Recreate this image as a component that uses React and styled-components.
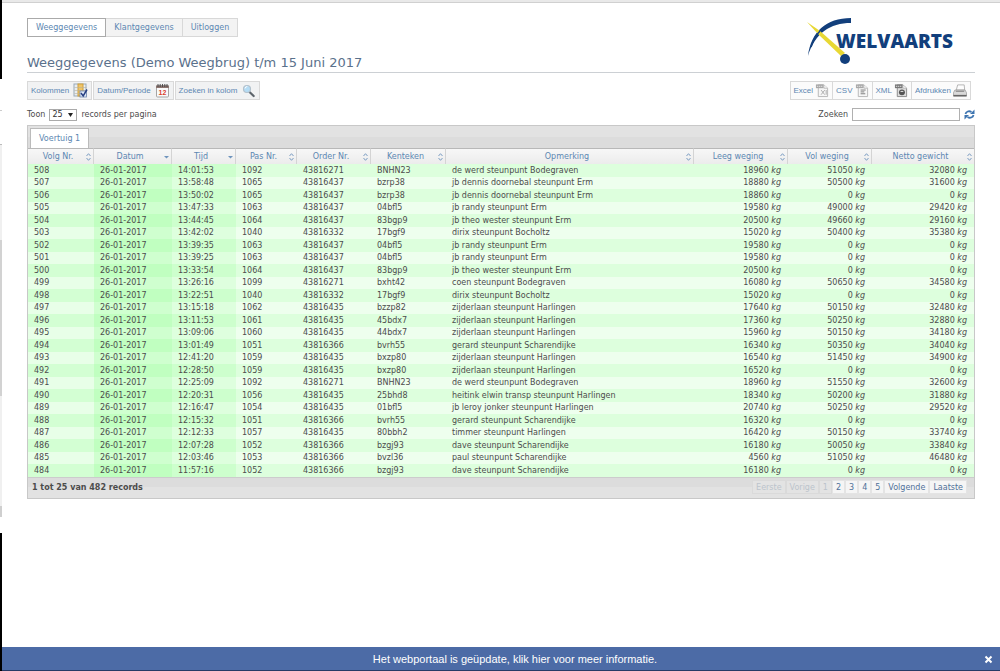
import React, { useState } from "react";
import styled, { createGlobalStyle } from "styled-components";

const GlobalStyle = createGlobalStyle`
  * {
    box-sizing: border-box;
  }

  body {
    margin: 0;
    background: #fff;
    color: #4c4c4c;
    font-family: "DejaVu Sans", Verdana, sans-serif;
    font-size: 8px;
  }

  button,
  input,
  select {
    margin: 0;
    font-family: inherit;
    font-size: inherit;
  }
`;

const Page = styled.div`
  display: flex;
  min-height: 100vh;
`;

const Edge = styled.div`
  display: flex;
  flex-direction: column;
  flex: 0 0 2px;
`;

const EdgePart = styled.div`
  flex: ${({ size }) => (size ? `0 0 ${size}px` : "1 0 0")};
  background: ${({ color }) => color};
`;

const Screen = styled.div`
  display: flex;
  flex-direction: column;
  flex: 1;
  min-width: 0;
  border-top: 2px solid #e9e9e9;
`;

const Content = styled.main`
  flex: 1;
  padding: 15px 25px 16px 25px;
  border-top: 1px solid #d0d0d0;
`;

const Header = styled.header`
  display: flex;
  justify-content: space-between;
  height: 55px;
  border-bottom: 1px solid #ccd0d4;
`;

const HeaderLeft = styled.div`
  display: flex;
  flex-direction: column;
  justify-content: space-between;
`;

const Nav = styled.nav`
  display: flex;
`;

const NavLink = styled.a`
  padding: 1px 8px 0;
  margin-left: -1px;
  line-height: 16px;
  color: #5c87b2;
  text-decoration: none;
  border: 1px solid #d8d8d8;
  background: #f3f3f3;

  &:first-child {
    margin-left: 0;
  }

  &[aria-current] {
    position: relative;
    background: #fff;
    border-color: #aaa;
  }
`;

const Title = styled.h1`
  margin: 0;
  color: #5a718c;
  font-size: 13px;
  font-weight: normal;
  line-height: 19px;
`;

const Logo = styled.svg`
  width: 152px;
  height: 48px;
  margin-right: 17px;
`;

const Toolbar = styled.div`
  display: flex;
  justify-content: space-between;
  padding: 8px 4px 0 0;
`;

const ToolGroup = styled.div`
  display: flex;
  gap: ${({ gap }) => gap || 0}px;
`;

const ToolButton = styled.button`
  display: flex;
  align-items: center;
  gap: ${({ joined }) => (joined ? 2 : 4)}px;
  height: 19px;
  padding: 0 3px;
  margin-left: ${({ joined }) => (joined ? "-1px" : "0")};
  color: #5c87b2;
  font-family: "Liberation Sans", Arial, sans-serif;
  font-size: 8px;
  white-space: nowrap;
  border: 1px solid #d9d9d9;
  background: ${({ joined }) => (joined ? "#fbfbfb" : "#f1f2f3")};

  svg {
    width: ${({ joined }) => (joined ? 14 : 15)}px;
    height: 15px;
  }
`;

const Filters = styled.div`
  display: flex;
  align-items: center;
  justify-content: space-between;
  height: 25px;
  padding-top: 4px;

  label {
    display: flex;
    align-items: center;
    gap: 4px;
  }
`;

const LengthBox = styled.span`
  position: relative;
  display: flex;
`;

const LengthSelect = styled.select`
  appearance: none;
  width: 28px;
  height: 12px;
  padding: 0 2px;
  color: #333;
  line-height: 10px;
  border: 1px solid #aaa;
  border-radius: 0;
  background: #fff;
`;

const LengthArrow = styled.svg`
  position: absolute;
  top: 4px;
  right: 4px;
  width: 5px;
  height: 4px;
  pointer-events: none;
`;

const SearchArea = styled.div`
  display: flex;
  align-items: center;
  gap: 4px;
`;

const SearchInput = styled.input`
  width: 108px;
  height: 13px;
  padding: 0 2px;
  border: 1px solid #b0b0b0;
  background: #fff;
`;

const RefreshButton = styled.button`
  display: flex;
  padding: 0;
  border: 0;
  background: none;

  svg {
    width: 11px;
    height: 11px;
  }
`;

const Grid = styled.section`
  border: 1px solid #c8c8c8;
  background: #e1e1e1;
`;

const TabBar = styled.div`
  display: flex;
  align-items: flex-end;
  height: 22px;
  padding-left: 2px;
  background: linear-gradient(#e2e2e2 0 11px, #dcdcdc 11px);
`;

const Tab = styled.button`
  height: 20px;
  padding: 0 8px;
  color: #5c87b2;
  border: 1px solid #bbb;
  border-bottom: 0;
  background: #fff;
`;

const Table = styled.table`
  width: 100%;
  table-layout: fixed;
  border-collapse: separate;
  border-spacing: 0;
`;

const Th = styled.th`
  width: ${({ size }) => (size ? `${size}px` : "auto")};
  height: 16px;
  padding: 0;
  border-top: 1px solid #b8b8b8;
  border-right: 1px solid #d4d4d4;
  background: linear-gradient(#f7f7f7, #ececec);

  &:last-child {
    border-right: 0;
  }
`;

const SortButton = styled.button`
  display: flex;
  align-items: center;
  width: 100%;
  height: 15px;
  padding: 0 2px;
  color: #5c87b2;
  border: 0;
  background: none;

  span {
    flex: 1;
    text-align: center;
  }

  svg {
    width: 5px;
    height: 8px;
  }
`;

const Tr = styled.tr`
  height: 12px;
  background: #eeffee;

  &:nth-child(odd) {
    height: 13px;
    background: #ddffdd;
  }
`;

const tints = {
  first: ["#c0ffc0", "#cfffcf"],
  second: ["#cdffcd", "#deffde"],
  third: ["#d3ffd3", "#e8ffe8"],
};

const Td = styled.td`
  padding: 0 7px 0 6px;
  line-height: 12px;
  white-space: nowrap;
  text-align: ${({ align }) => align || "left"};
  background: ${({ tint }) => (tint ? tints[tint][1] : "none")};

  ${Tr}:nth-child(odd) & {
    background: ${({ tint }) => (tint ? tints[tint][0] : "none")};
  }
`;

const GridFooter = styled.div`
  display: flex;
  align-items: center;
  justify-content: space-between;
  height: 21px;
  padding: 0 7px 2px 4px;
  border-top: 1px solid #ccc;
  background: linear-gradient(#dcdcdc 0 9px, #e2e2e2 9px);
`;

const Pager = styled.nav`
  display: flex;
`;

const PageButton = styled.button`
  height: 14px;
  padding: 0 3px;
  color: #4f7199;
  border: 1px solid #e4e4e4;
  background: #f5f5f5;

  &:disabled {
    color: #bcc4cc;
    border-color: #dadada;
    background: #e3e3e3;
  }
`;

const Notice = styled.footer`
  display: flex;
  align-items: center;
  height: 24px;
  padding: 0 7px 0 44px;
  border-bottom: 1px solid #283b66;
  background: #4c6ba6;
`;

const NoticeLink = styled.a`
  flex: 1;
  color: #fff;
  font-family: "Liberation Sans", Arial, sans-serif;
  font-size: 11px;
  text-align: center;
  text-decoration: none;
`;

const CloseButton = styled.button`
  display: flex;
  padding: 2px 0 0;
  border: 0;
  background: none;

  svg {
    width: 9px;
    height: 9px;
  }
`;

const columns = [
  { name: "Volg Nr.", size: 66, sort: "both", tint: "third" },
  { name: "Datum", size: 78, sort: "desc", tint: "first" },
  { name: "Tijd", size: 64, sort: "desc", tint: "second" },
  { name: "Pas Nr.", size: 61, sort: "both" },
  { name: "Order Nr.", size: 74, sort: "both" },
  { name: "Kenteken", size: 75, sort: "both" },
  { name: "Opmerking", sort: "both" },
  { name: "Leeg weging", size: 94, sort: "both", weight: true },
  { name: "Vol weging", size: 84, sort: "both", weight: true },
  { name: "Netto gewicht", size: 102, sort: "both", weight: true },
];

const rows = [
  [508, "26-01-2017", "14:01:53", 1092, 43816271, "BNHN23", "de werd steunpunt Bodegraven", 18960, 51050, 32080],
  [507, "26-01-2017", "13:58:48", 1065, 43816437, "bzrp38", "jb dennis doornebal steunpunt Erm", 18880, 50500, 31600],
  [506, "26-01-2017", "13:50:02", 1065, 43816437, "bzrp38", "jb dennis doornebal steunpunt Erm", 18860, 0, 0],
  [505, "26-01-2017", "13:47:33", 1063, 43816437, "04bfl5", "jb randy steunpunt Erm", 19580, 49000, 29420],
  [504, "26-01-2017", "13:44:45", 1064, 43816437, "83bgp9", "jb theo wester steunpunt Erm", 20500, 49660, 29160],
  [503, "26-01-2017", "13:42:02", 1040, 43816332, "17bgf9", "dirix steunpunt Bocholtz", 15020, 50400, 35380],
  [502, "26-01-2017", "13:39:35", 1063, 43816437, "04bfl5", "jb randy steunpunt Erm", 19580, 0, 0],
  [501, "26-01-2017", "13:39:25", 1063, 43816437, "04bfl5", "jb randy steunpunt Erm", 19580, 0, 0],
  [500, "26-01-2017", "13:33:54", 1064, 43816437, "83bgp9", "jb theo wester steunpunt Erm", 20500, 0, 0],
  [499, "26-01-2017", "13:26:16", 1099, 43816271, "bxht42", "coen steunpunt Bodegraven", 16080, 50650, 34580],
  [498, "26-01-2017", "13:22:51", 1040, 43816332, "17bgf9", "dirix steunpunt Bocholtz", 15020, 0, 0],
  [497, "26-01-2017", "13:15:18", 1062, 43816435, "bzzp82", "zijderlaan steunpunt Harlingen", 17640, 50150, 32480],
  [496, "26-01-2017", "13:11:53", 1061, 43816435, "45bdx7", "zijderlaan steunpunt Harlingen", 17360, 50250, 32880],
  [495, "26-01-2017", "13:09:06", 1060, 43816435, "44bdx7", "zijderlaan steunpunt Harlingen", 15960, 50150, 34180],
  [494, "26-01-2017", "13:01:49", 1051, 43816366, "bvrh55", "gerard steunpunt Scharendijke", 16340, 50350, 34040],
  [493, "26-01-2017", "12:41:20", 1059, 43816435, "bxzp80", "zijderlaan steunpunt Harlingen", 16540, 51450, 34900],
  [492, "26-01-2017", "12:28:50", 1059, 43816435, "bxzp80", "zijderlaan steunpunt Harlingen", 16520, 0, 0],
  [491, "26-01-2017", "12:25:09", 1092, 43816271, "BNHN23", "de werd steunpunt Bodegraven", 18960, 51550, 32600],
  [490, "26-01-2017", "12:20:31", 1056, 43816435, "25bhd8", "heitink elwin transp steunpunt Harlingen", 18340, 50200, 31880],
  [489, "26-01-2017", "12:16:47", 1054, 43816435, "01bfl5", "jb leroy jonker steunpunt Harlingen", 20740, 50250, 29520],
  [488, "26-01-2017", "12:15:32", 1051, 43816366, "bvrh55", "gerard steunpunt Scharendijke", 16320, 0, 0],
  [487, "26-01-2017", "12:12:33", 1057, 43816435, "80bbh2", "timmer steunpunt Harlingen", 16420, 50150, 33740],
  [486, "26-01-2017", "12:07:28", 1052, 43816366, "bzgj93", "dave steunpunt Scharendijke", 16180, 50050, 33840],
  [485, "26-01-2017", "12:03:46", 1053, 43816366, "bvzl36", "paul steunpunt Scharendijke", 4560, 51050, 46480],
  [484, "26-01-2017", "11:57:16", 1052, 43816366, "bzgj93", "dave steunpunt Scharendijke", 16180, 0, 0],
];

const edgeParts = [
  { size: 79, color: "#000" },
  { size: 31, color: "#fff" },
  { size: 1, color: "#ccc" },
  { size: 33, color: "#fff" },
  { size: 1, color: "#bbb" },
  { size: 95, color: "#f0f0f0" },
  { size: 156, color: "#d2d2d2" },
  { size: 110, color: "#f0f0f0" },
  { size: 11, color: "#cfcfcf" },
  { size: 16, color: "#fff" },
  { color: "#000" },
];

const ColumnsIcon = () => (
  <svg viewBox="0 0 15 15">
    <rect x="1" y="1" width="12" height="12" fill="#e8edf2" stroke="#9aa9b8" />
    <rect x="5" y="1" width="5" height="12" fill="#f0c568" stroke="#d0a03c" />
    <path d="M1.5 4.5h12M1.5 7.5h12M1.5 10.5h12" stroke="#b9b29a" strokeWidth="0.6" />
    <rect x="7" y="8" width="6.500" height="6" fill="#dfe9f7" stroke="#6b84ad" strokeWidth="0.8" />
    <path d="M8 10l2.200 3L14 6.500" fill="none" stroke="#263f82" strokeWidth="1.500" />
  </svg>
);

const CalendarIcon = () => (
  <svg viewBox="0 0 15 15">
    <rect x="1.500" y="2.500" width="12" height="11.500" rx="1" fill="#fafafa" stroke="#a5a5a5" />
    <path d="M1 2.500h13v2.500H1z" fill="#8d7570" />
    <path d="M3 1v3M5.200 1v3M7.500 1v3M9.800 1v3M12 1v3" stroke="#444" strokeWidth="0.9" />
    <text x="7.500" y="12" textAnchor="middle" fontSize="7" fontWeight="bold" fill="#d8402c">12</text>
  </svg>
);

const SearchIcon = () => (
  <svg viewBox="0 0 15 15">
    <path d="M8.500 9l4.200 4" stroke="#5d656c" strokeWidth="2.200" strokeLinecap="round" />
    <circle cx="6" cy="6" r="3.500" fill="#b4dcf5" stroke="#b3c1cc" strokeWidth="1.200" />
    <path d="M4 5.500a2.300 2.300 0 0 1 2.300-2" fill="none" stroke="#fff" />
  </svg>
);

const FileIcon = ({ children, dark }) => (
  <svg viewBox="0 0 15 15">
    <path d="M3.500 1.500h6l4 3.500v9h-10z" fill={dark ? "#ddd" : "#f6f6f6"} stroke={dark ? "#888" : "#b5b5b5"} />
    <path d="M9.500 1.500V5h4" fill="#fff" stroke="#b5b5b5" />
    <rect x="1" y="1" width="8" height="4" fill={dark ? "#777" : "#a8a8a8"} />
    <path d="M2 3h6" stroke="#eee" strokeWidth="0.9" strokeDasharray="1.500 0.700" />
    {children}
  </svg>
);

const PrinterIcon = () => (
  <svg viewBox="0 0 15 15">
    <path d="M3.500 7L5 1.500h7L12.500 7z" fill="#fdfdfd" stroke="#aaa" strokeWidth="0.9" />
    <path d="M2 7h11l1.500 3v3.500H.5V10z" fill="#d9d9d9" stroke="#999" strokeWidth="0.8" />
    <path d="M3 8.300h9" stroke="#777" />
    <path d="M.5 13h14" stroke="#666" strokeWidth="1.600" />
  </svg>
);

const SortIcon = ({ direction }) => (
  <svg viewBox="0 0 5 8">
    {direction === "both" ? (
      <path d="M0.500 3L2.500 0.700 4.500 3M0.500 5L2.500 7.300 4.500 5" fill="none" stroke="#6f94bd" strokeWidth="0.9" />
    ) : (
      <path d="M0 3h5L2.500 5.500z" fill="#6f94bd" />
    )}
  </svg>
);

const WelvaartsLogo = () => (
  <Logo viewBox="0 0 152 48" role="img" aria-label="Welvaarts">
    <path d="M2 38C5 14 20 0 45 0v5C24 5 9 15 2 38z" fill="#123f7c" />
    <path d="M1 4l13 9 25 22-4 3-23-22z" fill="#e8d834" />
    <path d="M5 29C7 23 10 17 14 13" fill="none" stroke="#123f7c" strokeWidth="1.500" />
    <circle cx="39" cy="41" r="5" fill="#123f7c" />
    <text x="30" y="30" fontFamily="Open Sans" fontWeight="800" fontSize="19" fill="#123f7c">
      WELVAARTS
    </text>
  </Logo>
);

const App = () => {
  const [noticeOpen, setNoticeOpen] = useState(true);

  return (
    <Page>
      <GlobalStyle />
      <Edge>
        {edgeParts.map((part, index) => (
          <EdgePart key={index} size={part.size} color={part.color} />
        ))}
      </Edge>
      <Screen>
        <Content>
          <Header>
            <HeaderLeft>
              <Nav>
                <NavLink href="#weeggegevens" aria-current="page">Weeggegevens</NavLink>
                <NavLink href="#klantgegevens">Klantgegevens</NavLink>
                <NavLink href="#uitloggen">Uitloggen</NavLink>
              </Nav>
              <Title>Weeggegevens (Demo Weegbrug) t/m 15 Juni 2017</Title>
            </HeaderLeft>
            <WelvaartsLogo />
          </Header>

          <Toolbar>
            <ToolGroup gap={1}>
              <ToolButton>Kolommen <ColumnsIcon /></ToolButton>
              <ToolButton>Datum/Periode <CalendarIcon /></ToolButton>
              <ToolButton>Zoeken in kolom <SearchIcon /></ToolButton>
            </ToolGroup>
            <ToolGroup>
              <ToolButton joined>
                Excel
                <FileIcon><path d="M6.500 7l4 5M10.500 7l-4 5M12 7v5" stroke="#aaa" /></FileIcon>
              </ToolButton>
              <ToolButton joined>
                CSV
                <FileIcon><path d="M6 7h5.500M6 9h4M6 11h5" stroke="#777" /></FileIcon>
              </ToolButton>
              <ToolButton joined>
                XML
                <FileIcon dark>
                  <circle cx="8.500" cy="9.500" r="3.200" fill="#555" />
                  <path d="M7 8.500h3" stroke="#eee" />
                </FileIcon>
              </ToolButton>
              <ToolButton joined>Afdrukken <PrinterIcon /></ToolButton>
            </ToolGroup>
          </Toolbar>

          <Filters>
            <label>
              Toon
              <LengthBox>
                <LengthSelect defaultValue="25">
                  <option>10</option>
                  <option>25</option>
                  <option>50</option>
                </LengthSelect>
                <LengthArrow viewBox="0 0 5 4"><path d="M0 0h5L2.500 4z" fill="#222" /></LengthArrow>
              </LengthBox>
              records per pagina
            </label>
            <SearchArea>
              <label>
                Zoeken
                <SearchInput type="text" />
              </label>
              <RefreshButton aria-label="Vernieuwen">
                <svg viewBox="0 0 11 11">
                  <path d="M1.500 5C2 2.500 5 1.500 7.500 3M9.500 6C9 8.500 6 9.500 3.500 8" fill="none" stroke="#3d74b0" strokeWidth="1.800" />
                  <path d="M10.500 .5v4.500H6zM.5 10.500V6H5z" fill="#3d74b0" />
                </svg>
              </RefreshButton>
            </SearchArea>
          </Filters>

          <Grid>
            <TabBar>
              <Tab>Voertuig 1</Tab>
            </TabBar>
            <Table>
              <thead>
                <tr>
                  {columns.map((column) => (
                    <Th key={column.name} size={column.size}>
                      <SortButton>
                        <span>{column.name}</span>
                        <SortIcon direction={column.sort} />
                      </SortButton>
                    </Th>
                  ))}
                </tr>
              </thead>
              <tbody>
                {rows.map((row) => (
                  <Tr key={row[0]}>
                    {columns.map((column, index) => (
                      <Td key={column.name} tint={column.tint} align={column.weight && "right"}>
                        {row[index]}
                        {column.weight && <em> kg</em>}
                      </Td>
                    ))}
                  </Tr>
                ))}
              </tbody>
            </Table>
            <GridFooter>
              <strong>1 tot 25 van 482 records</strong>
              <Pager>
                <PageButton disabled>Eerste</PageButton>
                <PageButton disabled>Vorige</PageButton>
                <PageButton disabled>1</PageButton>
                <PageButton>2</PageButton>
                <PageButton>3</PageButton>
                <PageButton>4</PageButton>
                <PageButton>5</PageButton>
                <PageButton>Volgende</PageButton>
                <PageButton>Laatste</PageButton>
              </Pager>
            </GridFooter>
          </Grid>
        </Content>

        {noticeOpen && (
          <Notice>
            <NoticeLink href="#update">Het webportaal is geüpdate, klik hier voor meer informatie.</NoticeLink>
            <CloseButton aria-label="Sluiten" onClick={() => setNoticeOpen(false)}>
              <svg viewBox="0 0 9 9">
                <path d="M1.500 1.500l6 6M7.500 1.500l-6 6" stroke="#fff" strokeWidth="2" />
              </svg>
            </CloseButton>
          </Notice>
        )}
      </Screen>
    </Page>
  );
};

export default App;
